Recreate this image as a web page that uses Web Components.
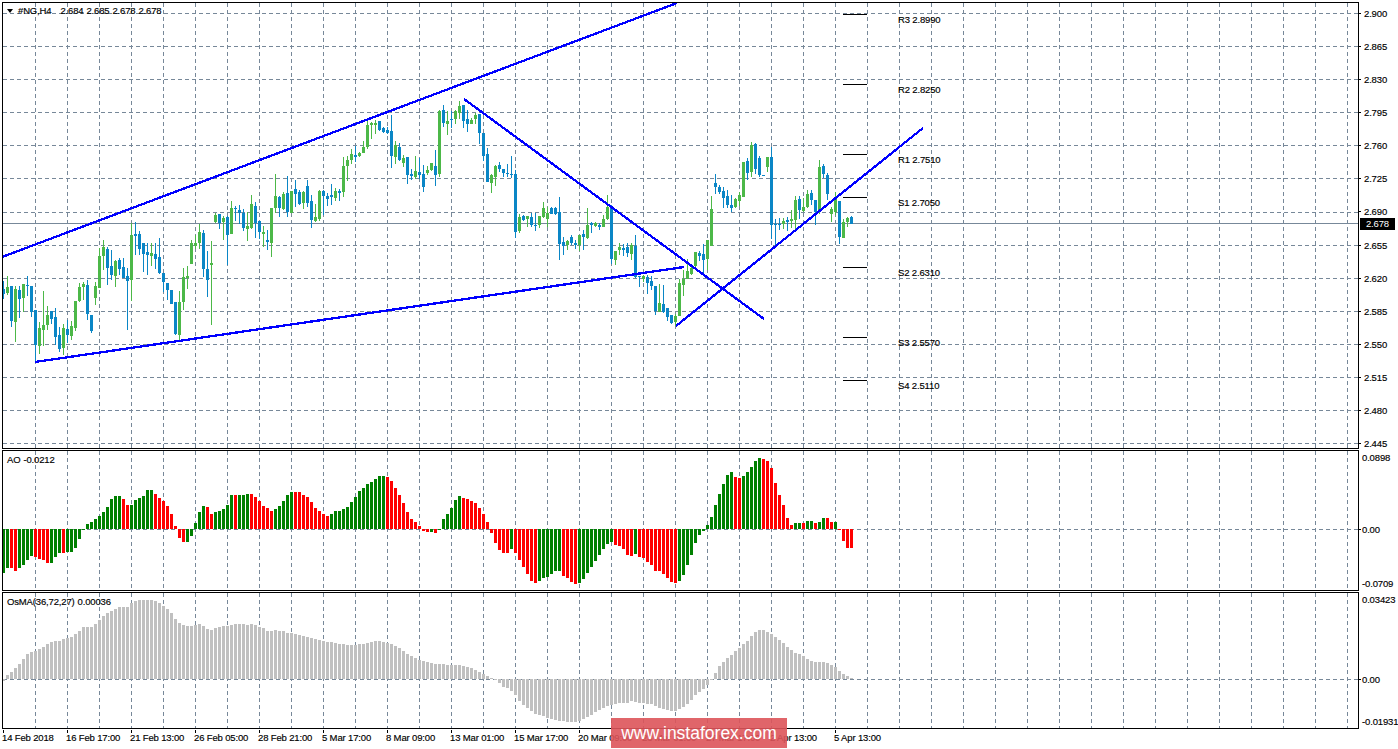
<!DOCTYPE html>
<html>
<head>
<meta charset="utf-8">
<title>#NG,H4</title>
<style>
  html, body { margin: 0; padding: 0; background: #fff; }
</style>
</head>
<body>
<mt-terminal>
  <chart-panel size="447" top="2" legend-top="2">
    <span slot="legend"><legend-arrow></legend-arrow>#NG,H4&nbsp;&nbsp; 2.684 2.685 2.678 2.678</span>
    <price-plot top="3" height="445"></price-plot>
    <price-axis slot="axis" top="2" indent="3" badge="2.678@223.5"
      labels="2.900@13.5@t,2.865@46.6@t,2.830@79.7@t,2.795@112.8@t,2.760@145.9@t,2.725@178.9@t,2.690@212@t,2.655@245.1@t,2.620@278.2@t,2.585@311.3@t,2.550@344.4@t,2.515@377.5@t,2.480@410.6@t,2.445@443.7@t"></price-axis>
  </chart-panel>
  <chart-panel size="141" top="450">
    <span slot="legend">AO -0.0212</span>
    <ao-plot top="451" height="139"></ao-plot>
    <price-axis slot="axis" top="450" indent="1" labels="0.0898@457.7,0.00@529.3@t,-0.0709@583.3"></price-axis>
  </chart-panel>
  <chart-panel size="137" top="592">
    <span slot="legend">OsMA(36,72,27) 0.00036</span>
    <osma-plot top="593" height="135"></osma-plot>
    <price-axis slot="axis" top="592" indent="1" labels="0.03423@599.3,0.00@679.3@t,-0.01931@721.7"></price-axis>
  </chart-panel>
  <time-axis>
    <time-tick>14 Feb 2018</time-tick>
    <time-tick>16 Feb 17:00</time-tick>
    <time-tick>21 Feb 13:00</time-tick>
    <time-tick>26 Feb 05:00</time-tick>
    <time-tick>28 Feb 21:00</time-tick>
    <time-tick>5 Mar 17:00</time-tick>
    <time-tick>8 Mar 09:00</time-tick>
    <time-tick>13 Mar 01:00</time-tick>
    <time-tick>15 Mar 17:00</time-tick>
    <time-tick>20 Mar 09:00</time-tick>
    <time-tick>23 Mar 01:00</time-tick>
    <time-tick>27 Mar 17:00</time-tick>
    <time-tick>2 Apr 13:00</time-tick>
    <time-tick>5 Apr 13:00</time-tick>
  </time-axis>
  <insta-mark>www.instaforex.com</insta-mark>
</mt-terminal>

<script>
const CHART_FONT = `font: 9.5px/11px "Liberation Sans", Arial, sans-serif; letter-spacing: -0.15px; color: #000; -webkit-text-stroke: 0.15px #000;`;
const GRID = '#778899';
const SVG_NS = 'http://www.w3.org/2000/svg';

// candles read off the chart: colour, high, body top, body bottom, low
// each block is in its own crop coordinates (3x, offset y0)
const CANDLES = [
  [160, `b363,388,402,417 g348,381,399,405 b378,378,483,500 g378,387,486,546 b378,390,417,473 g372,372,414,455 b348,375,378,408 b378,378,456,470
    b450,450,555,606 g487,504,558,582 g393,495,510,558 g438,465,495,510 b453,453,477,493 b445,471,531,555 b501,525,567,576 g492,504,564,585
    b480,507,525,550 g483,498,528,540 g423,423,504,513 g369,381,423,425 g366,372,381,420 b360,375,462,480 b465,465,513,518 g366,378,414,435
    g264,288,384,384 g240,261,288,330 b260,267,324,375 b270,318,345,360 g300,303,348,381 b294,300,327,345 b295,321,354,354 b325,348,363,510
    g190,225,360,423 b186,222,228,285 b212,222,267,285 b249,249,282,336 b249,276,285,345 g249,279,288,318 b249,282,297,327 b234,291,339,342
    b339,339,366,396 b369,369,390,420 b390,390,432,432 b426,426,522,525 g393,426,525,540 g324,351,426,450 g318,348,354,387 g240,249,312,312
    g225,249,258,267 g192,216,249,267 b210,219,327,351 b273,327,360,411 g243,309,315,495 g159,165,186,190 b162,162,189,207 g168,174,186,240
    b168,171,225,315 g123,144,222,222 b138,144,147,183 b135,150,159,192 b148,159,204,213 g156,198,207,243 g105,132,204,207 b126,138,190,234
    b183,183,216,237 g198,216,222,261 b210,240,246,270 g144,144,249,291 g42,108,144,159 b108,111,144,170 g96,102,147,150 b48,99,156,170
    g93,93,159,160 b60,87,102,141 b90,96,132,135`],
  [90, `g303,306,339,357 b270,288,339,351 b315,333,390,413 g342,381,393,396 g300,303,387,393 b300,303,318,375 b309,318,327,348 b282,315,321,345
    g294,303,324,333 b297,303,309,333 g201,228,306,321 g198,210,228,273 g177,192,210,222 b168,195,201,216 g186,189,198,201 g153,171,189,189
    g90,105,171,177 g96,99,105,147 g90,99,105,132 b93,93,120,123 b111,114,126,130 b110,120,129,131 b75,123,198,234 g153,165,201,222
    b159,171,210,213 g195,204,219,231 b201,201,255,282 b237,252,258,270 g198,243,261,267 b204,246,255,267 b225,252,291,306 g228,240,249,255
    g219,219,240,243 b180,228,255,288 g60,63,252,261 b45,60,99,111 g63,93,102,135 b63,87,90,114 g60,63,87,102 g33,48,69,87
    b45,45,93,114 b60,87,102,126 g84,90,102,102 g69,75,87,102 b72,72,129,162 b129,129,198,213 b174,192,276,276 g252,255,279,309
    g225,228,261,288 b216,225,237,246 b237,237,249,261 b222,249,252,261 b198,252,255,264 b240,252,426,445 g372,381,423,429 b375,378,390,393
    g378,378,387,411 b369,381,405,411 b369,405,408,423 g378,378,405,414 g336,354,381,384 g351,369,387,411 b351,354,372,372 b351,354,372,375
    b321,366,462,510 b441,456,468,495 g450,453,465,480 b435,441,459,465 b450,459,465,477 g435,435,465,483 b420,432,441,480 g354,405,444,447
    b396,399,405,429 g396,399,408,411 b399,405,411,420`],
  [130, `g255,267,291,291 g195,231,267,270 b225,231,387,402 g363,363,390,405 g339,351,360,375 b342,354,360,378 b339,351,369,381 g339,345,372,390
    b315,348,441,444 b438,438,441,471 g435,438,447,456 b435,441,459,492 b438,453,468,480 b468,468,543,555 g462,519,546,546 b465,522,546,548
    b534,534,561,573 b555,555,579,582 g552,558,576,588 g447,459,558,558 g420,447,465,498 g388,423,447,447 g402,414,432,435 g366,366,408,411
    b363,369,378,393 b342,372,390,432 g330,330,387,420 g198,237,348,348 b132,159,171,192 b165,171,186,192 b171,183,204,234 b180,198,225,234
    b195,225,234,246 g204,207,231,234 g186,195,213,228 g96,96,201,201 b84,93,129,150 g36,45,126,141 b39,42,117,132 b78,84,135,141
    b135,135,138,138 g81,81,111,126 b51,81,285,327 b267,282,285,345 b264,282,285,300 g264,273,282,297 b261,270,276,303 g240,267,273,294
    g198,210,270,303 b198,207,240,267 g204,231,243,245 g180,192,231,234 b180,189,210,225 b210,210,246,285 g90,111,240,252 b102,108,132,144
    b129,135,192,210 g231,237,252,276 g186,207,246,255 b213,213,321,342 g267,276,324,324 g261,264,276,291 b258,261,282,282`]
];

const AO_BARS = `g398 g384 r384 r393 g384 g375 g360 g348 r351 r357 r360 r369 g369 g351 g339 r339 g336 g336 g324 g297 g270
  g252 g246 g237 g228 g216 g201 g177 g168 g168 r177 r195 g195 g180 g174 g168 g150 g150 r162 r174 r183 r198 r222 r258
  r294 r306 g306 g288 g249 g216 g198 r201 r222 g216 g213 g207 g195 g165 r165 g165 g165 g162 r162 r171 r183 r198 r204 r213 g207 g198 g183 g165 g156 r156 r156
  r165 r171 r186 r204 r213 r222 r228 g222 g213 g213 g207 g201 g186 g171 g153 g144 g132 g126 g117 g108 g108 r111 r123 r144 r165 r189 r216 r237 r246 r258
  r273 r276 g276 r279 g270 g237 g222 g204 g180 g168 r174 r177 r183 r189 r204 r222 r246 r279 r309 r330 r339 r339 g327 r339 r360 r381 r402 r423 r429
  g423 g414 g411 g402 g393 g393 r408 r414 r426 r432 g429 g417 g399 g381 g363 g345
  g327 g312 g306 r315 r318 r327 r345 r348 g342 r351 r354 r366 r375 r393 r393 r402 r414 r426 r429 g423 g405 g375 g345 g309 g285 g273
  g255 g231 g195 g162 g132 g105 g96 r111 r114 g108 g96 g81 g63 g54 r57 r63 r84 r129 r165 r195 r234 r255 g249 g249 r249 g243 g243 r249 g246 g234 r234 r246 g246
  r270 r303 r324 r324`.trim().split(/\s+/);

const OSMA_A = [272,255,246,234,222,207,192,186,183,177,171,162,156,153,153,147,144,141,132,123,111,111,111,102,90,78,69,63,57,51,51,51,39,33,30,30,30,30,33,39,48,57,69,87,99,105,108,108,105,102,108,117,120,114,111,108,108,105,102,102,102,105,102,105,111,114,123,123,120,123,123,129,129,132,135];
const OSMA_B = [636,637,638,639,640,641,642,642,643,644,644,645,645,645,644,644,643,642,641,641,642,643,644,646,648,651,654,656,658,660,661,662,663,664,664,664,665,665,665,665,666,667,668,670,672,674,676,678,680,683];
const OSMA_C = [141,144,153,165,183,195,204,213,222,225,228,234,237,240,243,243,246,246,246,243,237,231,225,216,210,204,198,195,192,189,189,189,183,186,189,189,192,192,198,204,207,210,213,213,207,201,192,180,165,156,147,135,121,99,78,66,54,45,33,24,12,3,-12,-24,-30,-30,-24,-18,-9,0,9,21,30,39,42,48,57,63,66,66,66,69,75,81,93,102,108,114];

function osmaTops() {
  return [
    ...OSMA_A.map(v => 590 + v / 3),
    ...OSMA_B,
    ...OSMA_C.map(v => 640 + v / 3)
  ];
}

// shared drawing for the three plots, all coordinates are page pixels
class PlotBase extends HTMLElement {
  connectedCallback() {
    this.attachShadow({ mode: 'open' });
    const top = Number(this.getAttribute('top'));
    const height = Number(this.getAttribute('height'));
    this.shadowRoot.innerHTML = `
      <style>
        :host { display: block; width: 1355px; height: ${height}px; }
        svg { display: block; width: 1355px; height: ${height}px; shape-rendering: crispEdges; }
        text { font: 9.5px "Liberation Sans", Arial, sans-serif; letter-spacing: -0.15px; fill: #000; stroke: #000; stroke-width: 0.15px; }
      </style>
      <svg xmlns="${SVG_NS}" viewBox="3 ${top} 1355 ${height}">${this.verticalGrid(top, height)}${this.draw()}</svg>
    `;
  }

  verticalGrid(top, height) {
    let out = '';
    for (let x = 35.5; x < 1358; x += 32) {
      out += `<line x1="${x}" x2="${x}" y1="${top}" y2="${top + height}" stroke="${GRID}" stroke-dasharray="4 3"/>`;
    }
    return out;
  }

  horizontal(y) {
    return `<line x1="3" x2="1358" y1="${y}" y2="${y}" stroke="${GRID}" stroke-dasharray="4 3"/>`;
  }

  bar(i, y1, y2, fill) {
    const a = Math.min(y1, y2), h = Math.max(Math.abs(y2 - y1), 1);
    return `<rect x="${2 + 4 * i}" y="${a}" width="3" height="${h}" fill="${fill}"/>`;
  }
}

class PricePlot extends PlotBase {
  draw() {
    let out = '';
    for (let k = 0; k < 14; k++) out += this.horizontal(Math.round(13 + k * 33.09) + 0.5);
    out += `<line x1="3" x2="1358" y1="223.5" y2="223.5" stroke="${GRID}"/>`;

    let i = 0;
    for (const [y0, text] of CANDLES) {
      for (const item of text.trim().split(/\s+/)) {
        const fill = item[0] === 'g' ? '#4cb848' : '#0a86c6';
        const [hi, top, bot, lo] = item.slice(1).split(',').map(v => Math.round(y0 + Number(v) / 3));
        out += `<rect x="${3 + 4 * i}" y="${hi}" width="1" height="${Math.max(lo - hi, 1)}" fill="${fill}"/>`;
        out += this.bar(i, top, bot, fill);
        i++;
      }
    }

    // pivot levels
    const pivots = [['R3 2.8990', 14, 22.5], ['R2 2.8250', 84, 92.5], ['R1 2.7510', 154, 162.5], ['S1 2.7050', 197, 205.5],
      ['S2 2.6310', 267, 275.5], ['S3 2.5570', 337, 345.5], ['S4 2.5110', 380, 388.5]];
    for (const [name, y, ty] of pivots) {
      out += `<rect x="843" y="${y}" width="24" height="1" fill="#000"/>`;
      out += `<text x="898" y="${ty}">${name}</text>`;
    }

    // trend lines
    const lines = [[2, 257, 677, 3], [35, 362, 684, 267], [464, 99, 764, 319], [676, 326, 923, 128]];
    for (const [x1, y1, x2, y2] of lines) {
      out += `<line x1="${x1}" y1="${y1}" x2="${x2}" y2="${y2}" stroke="#0000ff" stroke-width="2.3"/>`;
    }
    return out;
  }
}

class AoPlot extends PlotBase {
  draw() {
    let out = this.horizontal(529.5);
    AO_BARS.forEach((b, i) => {
      const y = Math.round(440 + Number(b.slice(1)) / 3);
      out += this.bar(i, y, 529, b[0] === 'g' ? '#008000' : '#ff0000');
    });
    return out;
  }
}

class OsmaPlot extends PlotBase {
  draw() {
    let out = this.horizontal(679.5);
    osmaTops().forEach((y, i) => {
      out += this.bar(i, Math.round(y), 679, '#c0c0c0');
    });
    return out;
  }
}

class ChartPanel extends HTMLElement {
  constructor() {
    super();
    this.attachShadow({ mode: 'open' });
  }

  connectedCallback() {
    const legendTop = this.getAttribute('legend-top') || 3;
    this.shadowRoot.innerHTML = `
      <style>
        :host { display: flex; height: ${this.getAttribute('size')}px; flex: none; }
        .plot { position: relative; width: 1357px; box-sizing: border-box; border: 1px solid #000; flex: none; overflow: hidden; }
        .legend { position: absolute; left: 4px; top: ${legendTop}px; ${CHART_FONT} word-spacing: 0.5px; white-space: nowrap; }
        .axis { flex: 1; min-width: 0; }
      </style>
      <div class="plot">
        <slot></slot>
        <div class="legend"><slot name="legend"></slot></div>
      </div>
      <div class="axis"><slot name="axis"></slot></div>
    `;
  }
}

class LegendArrow extends HTMLElement {
  constructor() {
    super();
    this.attachShadow({ mode: 'open' }).innerHTML = `
      <style>
        :host { display: inline-block; width: 0; height: 0; margin: 0 5px 1px 0; vertical-align: middle;
          border-left: 3.5px solid transparent; border-right: 3.5px solid transparent; border-top: 4px solid #000; }
      </style>
    `;
  }
}

class PriceAxis extends HTMLElement {
  connectedCallback() {
    this.attachShadow({ mode: 'open' });
    const panelTop = Number(this.getAttribute('top'));
    const indent = Number(this.getAttribute('indent'));
    let cursor = panelTop;
    const rows = this.getAttribute('labels').split(',').map(spec => {
      const [text, center, tick] = spec.split('@');
      const gap = Number(center) - 5.5 - cursor;
      cursor = Number(center) + 5.5;
      return `<div class="row" style="margin-top:${gap.toFixed(2)}px">
        <i class="${tick ? 'tick' : 'notick'}"></i><span>${text}</span></div>`;
    }).join('');
    let badge = '';
    if (this.hasAttribute('badge')) {
      const [text, y] = this.getAttribute('badge').split('@');
      badge = `<div class="badge" style="top:${Number(y) - 6 - panelTop}px">${text}</div>`;
    }
    this.shadowRoot.innerHTML = `
      <style>
        :host { display: flex; flex-direction: column; position: relative; height: 100%; ${CHART_FONT} }
        .row { display: flex; align-items: center; height: 11px; flex: none; gap: ${indent}px; white-space: nowrap; }
        i { display: block; width: 2px; height: 1px; flex: none; }
        .tick { background: #000; }
        .badge { position: absolute; left: 1px; width: 35px; height: 12px; line-height: 12px;
          background: #000; color: #fff; -webkit-text-stroke: 0; text-align: center; }
      </style>
      ${rows}${badge}
    `;
  }
}

class TimeAxis extends HTMLElement {
  constructor() {
    super();
    this.attachShadow({ mode: 'open' }).innerHTML = `
      <style>
        :host { display: flex; flex: 1; padding-left: 1px; min-height: 0; ${CHART_FONT} }
      </style>
      <slot></slot>
    `;
  }
}

class TimeTick extends HTMLElement {
  constructor() {
    super();
    this.attachShadow({ mode: 'open' }).innerHTML = `
      <style>
        :host { display: flex; flex-direction: column; width: 64px; flex: none; white-space: nowrap; }
        i { display: block; width: 1px; height: 3px; background: #000; flex: none; }
        span { margin: -1px 0 0 -1px; }
      </style>
      <i></i><span><slot></slot></span>
    `;
  }
}

class InstaMark extends HTMLElement {
  constructor() {
    super();
    this.attachShadow({ mode: 'open' }).innerHTML = `
      <style>
        :host { position: absolute; left: 611px; top: 718px; width: 176px; height: 30px;
          display: flex; align-items: center; justify-content: center;
          background: rgba(221, 84, 90, 0.9); color: #fff;
          font: 17.5px "Liberation Sans", Arial, sans-serif; }
      </style>
      <slot></slot>
    `;
  }
}

class MtTerminal extends HTMLElement {
  constructor() {
    super();
    this.attachShadow({ mode: 'open' }).innerHTML = `
      <style>
        :host { display: flex; flex-direction: column; position: relative; box-sizing: border-box;
          width: 1398px; height: 749px; padding: 2px 0 0 2px; gap: 1px; overflow: hidden; background: #fff; }
      </style>
      <slot></slot>
    `;
  }
}

customElements.define('legend-arrow', LegendArrow);
customElements.define('price-plot', PricePlot);
customElements.define('ao-plot', AoPlot);
customElements.define('osma-plot', OsmaPlot);
customElements.define('chart-panel', ChartPanel);
customElements.define('price-axis', PriceAxis);
customElements.define('time-tick', TimeTick);
customElements.define('time-axis', TimeAxis);
customElements.define('insta-mark', InstaMark);
customElements.define('mt-terminal', MtTerminal);
</script>
</body>
</html>
